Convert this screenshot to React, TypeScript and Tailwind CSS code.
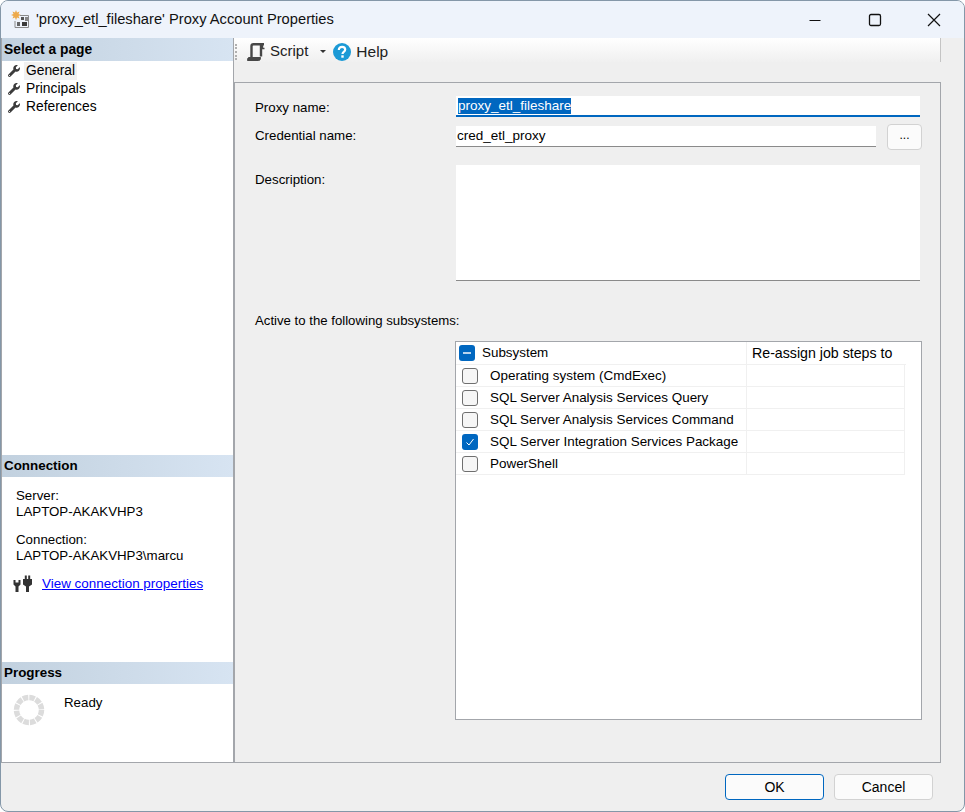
import { FaWrench } from "react-icons/fa";

const pages = ["General", "Principals", "References"];

const subsystems = [
  { name: "Operating system (CmdExec)", checked: false },
  { name: "SQL Server Analysis Services Query", checked: false },
  { name: "SQL Server Analysis Services Command", checked: false },
  { name: "SQL Server Integration Services Package", checked: true },
  { name: "PowerShell", checked: false },
];

function SectionHeader({ title, size = "text-[13.400px]", height = "h-[22px]" }: { title: string; size?: string; height?: string }) {
  return (
    <div className={`flex ${height} shrink-0 items-center bg-gradient-to-r from-[#c2d1df] to-[#d7e4f2] pl-[2px] ${size} font-bold leading-none text-black`}>
      {title}
    </div>
  );
}

function AppIcon() {
  return (
    <svg width="19" height="19" viewBox="0 0 19 19">
      <path d="M5 0l1 2.600 2.500-1-1 2.500 2.500 1-2.500 1 1 2.500-2.500-1-1 2.600-1-2.600-2.500 1 1-2.500-2.500-1 2.500-1-1-2.500 2.500 1z" fill="#eda94a" />
      <path d="M9 5.500H17.500V17.500H4V11" fill="none" stroke="#8a8a8a" strokeWidth="1" />
      <rect x="10" y="7" width="3" height="3" fill="#555" />
      <rect x="14" y="7" width="3" height="4" fill="#888" />
      <rect x="6" y="12" width="3" height="4" fill="#666" />
      <rect x="11" y="12" width="5" height="4" fill="#3a3a3a" />
    </svg>
  );
}

function ScriptIcon() {
  return (
    <svg width="18" height="18" viewBox="0 0 18 18" fill="none" stroke="#474747">
      <path d="M4.500 14V3C4.500 1.800 5.300 1.200 6.500 1.200H17" strokeWidth="2.400" />
      <path d="M14 2V13.500" strokeWidth="2.400" />
      <path d="M15.500 1.500V5.500H17.500" strokeWidth="1.400" />
      <path d="M0.500 17.500H11.500C13 17.500 13.500 16.500 13.500 14.500H2C1 14.500 0.500 15.500 0.500 17.500Z" fill="#474747" strokeWidth="1" />
    </svg>
  );
}

function HelpIcon() {
  return (
    <svg width="18" height="18" viewBox="0 0 18 18">
      <circle cx="9" cy="9" r="9" fill="#1c9ad6" />
      <path d="M5.800 7c0-2.100 1.500-3.200 3.300-3.200 1.900 0 3.100 1.100 3.100 2.700 0 2.400-2.700 2.400-2.700 4.400" fill="none" stroke="#fff" strokeWidth="2.200" />
      <rect x="8.300" y="12.300" width="2.400" height="2.400" fill="#fff" />
    </svg>
  );
}

function PlugIcon() {
  return (
    <svg width="20" height="19" viewBox="0 0 20 19" fill="#333">
      <path d="M0.500 6h2v2.500h3V6h2v4.500L5.500 12.500V18h-3V12.500L0.500 10.500z" />
      <path d="M10 5h1.800V1.500h2V5h1.400V1.500h2V5H19v5.500l-3 2V18h-3v-5.500l-3-2z" />
    </svg>
  );
}

function Spinner() {
  return (
    <svg width="32" height="32" viewBox="0 0 32 32" fill="none">
      <circle cx="16" cy="16" r="12.500" stroke="#dcdcdc" strokeWidth="5.500" strokeDasharray="5.500 1.040" />
    </svg>
  );
}

function Check({ checked }: { checked: boolean }) {
  if (checked) {
    return (
      <span className="flex h-4 w-4 items-center justify-center rounded-[3px] bg-[#0067c0]">
        <svg width="10" height="10" viewBox="0 0 10 10" fill="none" stroke="#fff" strokeWidth="1">
          <path d="M1.500 5.500L4 8L8.500 2" />
        </svg>
      </span>
    );
  }
  return <span className="block h-4 w-4 rounded-[3px] border border-[#6f6f6f] bg-[#f6f6f6]" />;
}

export default function App() {
  return (
    <div className="h-[812px] w-[965px] overflow-hidden bg-white font-['Liberation_Sans',Arial,sans-serif] text-[13.300px] text-black">
      <div className="flex h-full flex-col overflow-hidden rounded-lg border border-[#8497a8] bg-[#efefef]">
        {/* TITLE BAR */}
        <div className="flex h-[37px] shrink-0 items-center bg-[#eef3fb]">
          <span className="ml-[10px] flex w-[25px] shrink-0">
            <AppIcon />
          </span>
          <span className="text-[14.700px] text-[#111]">'proxy_etl_fileshare' Proxy Account Properties</span>
          <div className="ml-auto flex items-center text-[#111]">
            <svg width="14" height="14" viewBox="0 0 14 14" className="mr-[46px]" stroke="currentColor" fill="none">
              <path d="M1.500 7.500H12.500" />
            </svg>
            <svg width="14" height="14" viewBox="0 0 14 14" className="mr-[45px]" stroke="currentColor" fill="none" strokeWidth="1.300">
              <rect x="1.500" y="1.500" width="11" height="11" rx="1.500" />
            </svg>
            <svg width="14" height="14" viewBox="0 0 14 14" className="mr-[23px]" stroke="currentColor" fill="none" strokeWidth="1.200">
              <path d="M1 1L13 13M13 1L1 13" />
            </svg>
          </div>
        </div>

        <div className="flex min-h-0 flex-1">
          {/* LEFT PANEL */}
          <aside className="flex h-[725px] w-[233px] shrink-0 flex-col border-x border-b border-[#a3a6ab] bg-white">
            <SectionHeader title="Select a page" size="text-[13.800px]" height="h-[23px]" />
            <ul className="flex h-[394px] flex-col pt-px">
              {pages.map((page, i) => (
                <li key={page} className="flex h-[18px] items-center pl-[6px]">
                  <FaWrench size={12} className="mr-[4px] text-[#3b3b3b]" />
                  <span className={`flex h-[18px] items-center px-[2px] text-[13.800px] ${i === 0 ? "bg-[#f1f1f1]" : ""}`}>{page}</span>
                </li>
              ))}
            </ul>

            <SectionHeader title="Connection" />
            <div className="h-[185px] pl-[14px] pt-[11px] leading-4">
              <p>Server:</p>
              <p>LAPTOP-AKAKVHP3</p>
              <p className="mt-3">Connection:</p>
              <p>LAPTOP-AKAKVHP3\marcu</p>
              <div className="mt-[10px] flex items-center">
                <span className="-ml-[3px] mr-[9px] flex">
                  <PlugIcon />
                </span>
                <a href="#" className="text-[13.450px] text-[#0000ff] underline">
                  View connection properties
                </a>
              </div>
            </div>

            <SectionHeader title="Progress" />
            <div className="flex pl-[11px] pt-[10px]">
              <span className="flex w-[51px]">
                <Spinner />
              </span>
              <span className="pt-px leading-4">Ready</span>
            </div>
          </aside>

          {/* RIGHT SIDE */}
          <div className="flex h-[725px] w-[707px] shrink-0 flex-col">
            <div className="flex h-[44px] shrink-0 items-start">
              <div className="flex h-[24px] w-full items-center border-r border-[#c4c4c4] bg-gradient-to-b from-white to-[#f0f0f0] pl-[1px] pt-[3px]">
                <span className="mr-[10px] h-[16px] w-[2px] border-l-2 border-dotted border-[#b0b0b0]" />
                <ScriptIcon />
                <span className="ml-[5px] text-[15px] text-[#222]">Script</span>
                <span className="ml-[12px] mr-[7px] h-0 w-0 border-x-[3px] border-t-[3px] border-x-transparent border-t-[#333]" />
                <HelpIcon />
                <span className="ml-[5px] text-[15.500px] text-[#222]">Help</span>
              </div>
            </div>

            <main className="flex-1 border border-[#a3a6ab] pl-[20px] pr-[18px]">
              <div className="flex h-[43px] flex-col">
                <div className="mt-[13px] flex">
                  <label className="w-[201px] pt-[4px] leading-4">Proxy name:</label>
                  <div className="flex h-[21px] w-[464px] items-start border-b-2 border-[#0067c0] bg-white pl-[2px] pt-[2px] text-[13.500px] leading-[16px]">
                    <span className="bg-[#0067c0] text-white">proxy_etl_fileshare</span>
                  </div>
                </div>
              </div>

              <div className="flex">
                <label className="w-[201px] pt-[2px] leading-4">Credential name:</label>
                <div className="flex h-[21px] w-[420px] items-center border-b border-[#8a8a8a] bg-white pl-[1px] text-[13.500px]">cred_etl_proxy</div>
                <button className="-mt-[2px] ml-[11px] h-[26px] w-[35px] rounded-[4px] border border-[#d2d2d2] bg-[#fbfbfb] pb-1 text-[12px] leading-none">...</button>
              </div>

              <div className="mt-[15px] flex">
                <label className="w-[201px] pt-[7px] leading-4">Description:</label>
                <div className="h-[116px] w-[464px] border-b border-[#8a8a8a] bg-white" />
              </div>

              <p className="mt-[32px] text-[13.200px] leading-4">Active to the following subsystems:</p>

              <div className="mt-[12px] ml-[200px] h-[379px] w-[467px] border border-[#a3a6ab] bg-white">
                <div className="flex h-[23px] w-[450px] border-b border-[#f0f0f0]">
                  <div className="flex w-[291px] items-center border-r border-[#f0f0f0] pl-[3px] text-[13.400px]">
                    <span className="mr-[7px] flex h-4 w-4 items-center justify-center rounded-[3px] bg-[#0067c0]">
                      <span className="h-[1.500px] w-2 bg-[#b8d4ee]" />
                    </span>
                    <span className="pt-px">Subsystem</span>
                  </div>
                  <div className="flex items-center pl-[5px] pt-px text-[14.200px]">Re-assign job steps to</div>
                </div>
                {subsystems.map((row) => (
                  <div key={row.name} className="flex h-[22px] w-[449px] border-b border-r border-[#f0f0f0]">
                    <div className="flex w-[291px] items-center border-r border-[#f0f0f0] pl-[6px] text-[13.450px]">
                      <span className="mr-[12px] pt-px">
                        <Check checked={row.checked} />
                      </span>
                      <span className="pt-px">{row.name}</span>
                    </div>
                  </div>
                ))}
              </div>
            </main>
          </div>
        </div>

        {/* FOOTER */}
        <div className="flex h-[49px] shrink-0 items-start justify-end gap-[10px] pr-[31px] pt-[12px]">
          <button className="h-[26px] w-[99px] rounded-[4px] border border-[#0067c0] bg-[#fbfbfb] text-[14px] leading-none">OK</button>
          <button className="h-[26px] w-[99px] rounded-[4px] border border-[#d2d2d2] bg-[#fbfbfb] text-[14px] leading-none">Cancel</button>
        </div>
      </div>
    </div>
  );
}
